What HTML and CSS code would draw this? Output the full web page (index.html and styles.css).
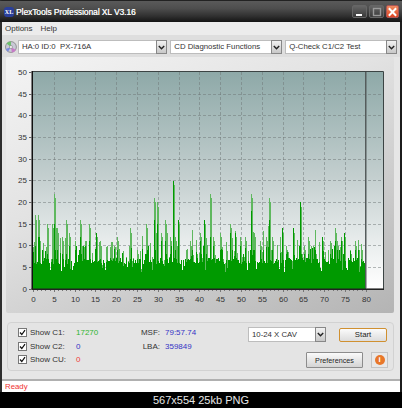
FILE: index.html
```html
<!DOCTYPE html>
<html lang="en">
<head>
<meta charset="utf-8">
<title>PlexTools Professional XL V3.16</title>
<link rel="stylesheet" href="styles.css">
</head>
<body>
<div class="window">
  <header class="titlebar">
    <span class="app-logo">XL</span>
    <span class="app-title">PlexTools Professional XL V3.16</span>
    <div class="win-buttons">
      <span class="win-btn"><svg width="12" height="12" viewBox="0 0 12 12"><rect x="2" y="8" width="6" height="2" fill="#fff"/></svg></span>
      <span class="win-btn"><svg width="12" height="12" viewBox="0 0 12 12"><rect x="2.5" y="2.5" width="7" height="7" fill="none" stroke="#9a9a9a" stroke-width="1.4"/></svg></span>
      <span class="win-btn close"><svg width="12" height="12" viewBox="0 0 12 12"><path d="M2 2 L10 10 M10 2 L2 10" stroke="#fff" stroke-width="2.2"/></svg></span>
    </div>
  </header>
  <nav class="menu"><span>Options</span><span>Help</span></nav>
  <div class="toolbar">
    <svg class="disc" width="12" height="12" viewBox="0 0 12 12">
      <circle cx="6" cy="6" r="5.5" fill="#c9c9d6" stroke="#777" stroke-width=".7"/>
      <path d="M6 6 L1.5 2.5 A6 6 0 0 1 6 .5 Z" fill="#6bc06b"/>
      <path d="M6 6 L11 9 A6 6 0 0 1 7 11.5 Z" fill="#c77ac7"/>
      <path d="M6 6 L.8 8 A6 6 0 0 0 3 10.8 Z" fill="#7a8ae0"/>
      <circle cx="6" cy="6" r="1.6" fill="#eee" stroke="#777" stroke-width=".5"/>
    </svg>
    <div class="combo c-device"><span class="combo-text">HA:0 ID:0&nbsp; PX-716A</span><span class="combo-btn"><svg width="7" height="5" viewBox="0 0 7 5"><path d="M.8 1 L3.5 3.8 L6.2 1" fill="none" stroke="#222" stroke-width="1.4"/></svg></span></div>
    <div class="combo c-func"><span class="combo-text">CD Diagnostic Functions</span><span class="combo-btn"><svg width="7" height="5" viewBox="0 0 7 5"><path d="M.8 1 L3.5 3.8 L6.2 1" fill="none" stroke="#222" stroke-width="1.4"/></svg></span></div>
    <div class="combo c-test"><span class="combo-text">Q-Check C1/C2 Test</span><span class="combo-btn"><svg width="7" height="5" viewBox="0 0 7 5"><path d="M.8 1 L3.5 3.8 L6.2 1" fill="none" stroke="#222" stroke-width="1.4"/></svg></span></div>
  </div>
  <section class="chart-panel">
    <svg id="chart" class="chart" width="388" height="256" viewBox="6 57 388 256"></svg>
  </section>
  <section class="controls">
    <div class="stats">
      <label class="check"><svg width="9" height="9" viewBox="0 0 9 9"><rect x=".5" y=".5" width="8" height="8" fill="#fff" stroke="#777"/><path d="M2 4.5 L3.8 6.5 L7 2.2" fill="none" stroke="#111" stroke-width="1.2"/></svg>Show C1:</label>
      <span class="val green">17270</span>
      <span class="lab">MSF:</span>
      <span class="val blue">79:57.74</span>
      <label class="check"><svg width="9" height="9" viewBox="0 0 9 9"><rect x=".5" y=".5" width="8" height="8" fill="#fff" stroke="#777"/><path d="M2 4.5 L3.8 6.5 L7 2.2" fill="none" stroke="#111" stroke-width="1.2"/></svg>Show C2:</label>
      <span class="val blue">0</span>
      <span class="lab">LBA:</span>
      <span class="val blue">359849</span>
      <label class="check"><svg width="9" height="9" viewBox="0 0 9 9"><rect x=".5" y=".5" width="8" height="8" fill="#fff" stroke="#777"/><path d="M2 4.5 L3.8 6.5 L7 2.2" fill="none" stroke="#111" stroke-width="1.2"/></svg>Show CU:</label>
      <span class="val red">0</span>
    </div>
    <div class="actions">
      <div class="action-row gap-start">
        <div class="combo c-speed"><span class="combo-text">10-24 X CAV</span><span class="combo-btn"><svg width="7" height="5" viewBox="0 0 7 5"><path d="M.8 1 L3.5 3.8 L6.2 1" fill="none" stroke="#222" stroke-width="1.4"/></svg></span></div>
        <button class="btn start">Start</button>
      </div>
      <div class="action-row gap-pref">
        <button class="btn prefs">Preferences</button>
        <button class="btn info"><span class="info-dot">i</span></button>
      </div>
    </div>
  </section>
  <footer class="status">Ready</footer>
</div>
<div class="caption">567x554 25kb PNG</div>
<script src="chart.js"></script>
</body>
</html>
```
FILE: styles.css
```css
* { box-sizing: border-box; }
html, body { margin: 0; padding: 0; }
body {
  width: 402px;
  height: 408px;
  background: #000;
  overflow: hidden;
  font-family: "Liberation Sans", Arial, sans-serif;
  font-size: 7.8px;
  color: #333;
}
.window {
  height: 392px;
  display: flex;
  flex-direction: column;
  background: #e6e6e6;
  border-left: 2px solid #2e2e2e;
  border-right: 2px solid #1c1c1c;
  border-top: 1px solid #222;
}
.titlebar {
  height: 21px;
  margin: 0 -2px;
  padding-left: 4px;
  display: flex;
  align-items: center;
  background: linear-gradient(#5a5a5a 0, #4e4e4e 35%, #303030 72%, #141414 100%);
  color: #fff;
}
.app-logo {
  width: 10px;
  height: 10px;
  border-radius: 3px;
  background: #2a3f9a;
  color: #fff;
  font: bold 6px "Liberation Serif", serif;
  line-height: 10px;
  text-align: center;
  margin-right: 2px;
}
.app-title {
  font-size: 8.3px;
  color: #f6f6f6;
  text-shadow: .3px 0 #f6f6f6;
}
.win-buttons {
  margin-left: auto;
  margin-right: 3px;
  display: flex;
  gap: 2px;
}
.win-btn {
  width: 15px;
  height: 13px;
  border: 1px solid #666;
  border-radius: 2px;
  background: linear-gradient(#666, #3a3a3a);
  display: flex;
  align-items: center;
  justify-content: center;
}
.win-btn.close {
  width: 13px;
  background: linear-gradient(#ee8a60, #dd4422);
  border-color: #a55;
}
.menu {
  height: 13px;
  padding-left: 3px;
  display: flex;
  gap: 8px;
  align-items: center;
  background: #ececec;
  color: #333;
  font-size: 8px;
}
.toolbar {
  height: 22px;
  padding: 2px 3px 0 3px;
  display: flex;
  align-items: center;
  background: #dedede;
}
.disc { margin-right: 1px; }
.combo {
  height: 14px;
  display: flex;
  background: #fff;
  border: 1px solid #bdbdbd;
  align-items: stretch;
}
.combo-text {
  flex: 1;
  padding-left: 3px;
  line-height: 12px;
  color: #333;
  white-space: nowrap;
  overflow: hidden;
}
.combo-btn {
  width: 11px;
  display: flex;
  align-items: center;
  justify-content: center;
  background: linear-gradient(#f2f2f2, #c8c8c8);
  border: 1px solid #888;
  margin: -1px;
}
.c-device { width: 151px; margin-right: 3px; }
.c-func { width: 113px; margin-right: 3px; }
.c-test { width: 113px; }
.chart-panel {
  height: 256px;
  margin: 0 6px 0 4px;
  border-radius: 2px;
  background: linear-gradient(155deg, #f4f4f4 0%, #e2e2e2 40%, #b4b4b4 100%);
}
.chart { display: block; }
.chart text {
  font-family: "Liberation Sans", Arial, sans-serif;
  font-size: 8px;
  fill: #333;
}
.controls {
  height: 49px;
  margin: 9px 6px 0 5px;
  border: 1px solid #d2d2d2;
  border-radius: 4px;
  background: #e4e4e4;
  display: flex;
  padding: 3px 5px 0 10px;
}
.stats {
  display: grid;
  grid-template-columns: 58px 64px 20px auto;
  grid-auto-rows: 13.5px;
  align-items: center;
  font-size: 8px;
}
.check {
  display: flex;
  align-items: center;
  gap: 3px;
  color: #333;
  white-space: nowrap;
}
.val { white-space: nowrap; }
.val.green { color: #2eb52e; }
.val.blue { color: #3434c4; }
.val.red { color: #f03c3c; }
.stats .lab { grid-column: 3; text-align: right; color: #333; white-space: nowrap; }
.stats .lab + .val { padding-left: 5px; }
.actions {
  margin-left: auto;
  padding-top: 1px;
  display: flex;
  flex-direction: column;
  align-items: flex-end;
}
.action-row { display: flex; align-items: center; }
.gap-start { gap: 13px; margin-right: 1px; }
.gap-pref { gap: 8px; margin-top: 10px; }
.c-speed { width: 78px; height: 15px; }
.c-speed .combo-text { line-height: 13px; }
.btn {
  font: inherit;
  color: #222;
  padding: 0;
  display: flex;
  align-items: center;
  justify-content: center;
}
.start {
  width: 48px;
  height: 14px;
  border: 1px solid #d09030;
  border-radius: 2px;
  background: linear-gradient(#fbfbfb, #dcdcdc);
}
.prefs {
  width: 57px;
  height: 16px;
  font-size: 7.2px;
  border: 1px solid #8c8c8c;
  border-radius: 1px;
  background: linear-gradient(#fafafa, #d4d4d4);
}
.info {
  width: 17px;
  height: 16px;
  border: 1px solid #c4c4c4;
  background: #e8e8e8;
}
.info-dot {
  width: 10px;
  height: 10px;
  border-radius: 50%;
  background: #e8772a;
  color: #fff;
  font-weight: bold;
  font-size: 8px;
  line-height: 10px;
  text-align: center;
}
.status {
  height: 13px;
  margin-top: 8px;
  padding-left: 3px;
  background: #fff;
  border-top: 2px solid #b0b0b0;
  color: #f03030;
  font-size: 7.8px;
  line-height: 11px;
}
.caption {
  height: 16px;
  color: #e8e8e8;
  font-size: 11px;
  line-height: 16px;
  text-align: center;
}
```
FILE: chart.js
```js
(function () {
  var NS = 'http://www.w3.org/2000/svg';
  var svg = document.getElementById('chart');
  var X0 = 33, XU = 4.16, Y0 = 288.5, YU = 4.33, RIGHT = 383, TOP = 72;

  function el(name, attrs, text) {
    var n = document.createElementNS(NS, name);
    for (var k in attrs) n.setAttribute(k, attrs[k]);
    if (text !== undefined) n.textContent = text;
    svg.appendChild(n);
    return n;
  }

  var defs = document.createElementNS(NS, 'defs');
  defs.innerHTML = '<linearGradient id="plotbg" x1="0" y1="0" x2="0" y2="1">' +
    '<stop offset="0" stop-color="#8ea9a8"/><stop offset=".5" stop-color="#c5d0d0"/>' +
    '<stop offset=".8" stop-color="#eaeeee"/><stop offset="1" stop-color="#fff"/></linearGradient>';
  svg.appendChild(defs);

  el('rect', { x: X0, y: TOP, width: RIGHT - X0, height: Y0 - TOP, fill: 'url(#plotbg)' });

  var i, y, x;
  // grid
  for (i = 5; i <= 45; i += 5) {
    y = Math.round(Y0 - i * YU) + .5;
    el('line', { x1: X0, x2: RIGHT, y1: y, y2: y, stroke: '#6e7676', 'stroke-opacity': .5, 'stroke-dasharray': '3 2' });
  }
  for (i = 5; i <= 75; i += 5) {
    x = Math.round(X0 + i * XU) + .5;
    el('line', { x1: x, x2: x, y1: TOP, y2: Y0, stroke: '#6e7676', 'stroke-opacity': .5, 'stroke-dasharray': '3 2' });
  }

  // seeded noise
  var s = 20240;
  function rnd() { s = (s * 16807) % 2147483647; return s / 2147483647; }

  // explicit spikes read from the trace: [pixel, light top, dark top]
  var peaks = [
    [35,17,9],[38,17,12],[39,12,12],[47,15,8],[52,15,7],[54,22,15],[55,15,9],[57,14,9],[62,12,8],[66,16,8],[69,13,10],
    [75,11,9],[80,16,12],[81,11,8],[85,11,10],[89,15,11],[96,13,13],[100,11,7],[117,12,9],[130,14,6],[137,9,7],
    [146,15,8],[147,11,9],[154,21,16],[155,14,9],[157,20,15],[161,13,11],[165,16,11],[166,14,8],[170,12,8],
    [173,25,25],[175,12,9],[178,16,16],[190,11,7],[196,9,8],[200,13,11],[204,16,16],[206,10,8],[210,22,12],
    [213,12,10],[220,13,9],[230,15,13],[235,13,13],[240,12,10],[245,12,8],[251,22,18],[254,13,9],[260,11,9],
    [266,12,8],[269,21,16],[272,12,9],[282,14,14],[286,10,8],[293,14,14],[300,20,20],[304,10,8],[308,12,8],
    [313,10,7],[322,12,12],[330,11,8],[335,14,11],[337,11,9],[341,12,11],[344,13,13],[350,9,7],[355,11,9],
    [358,10,9],[361,10,7]
  ];
  var pk = {};
  peaks.forEach(function (p) { pk[p[0]] = p; });

  var dark = '', light = '';
  var b = Math.round(Y0);
  function col(px, top) { return 'M' + px + ' ' + (b - Math.round(top * YU)) + 'h1V' + b + 'h-1Z'; }
  for (var px = 33; px < 366; px++) {
    var r = rnd(), base = 5.8 + rnd() * 1.4, d, l;
    if (r < .1) base = 3.8 + rnd() * 1.6;
    else if (r < .32) base = 7.5 + rnd() * 2.5;
    l = base + (rnd() < .4 ? rnd() * 5 : 0);
    d = base;
    light += col(px, l);
    dark += col(px, d);
    if (pk[px]) {
      light += col(px, pk[px][1]) + col(px + 1, pk[px][1] - 1);
      dark += col(px, pk[px][2]);
    }
  }
  el('path', { d: light, fill: '#5fb85f', 'shape-rendering': 'crispEdges' });
  el('path', { d: dark, fill: '#009a00', 'shape-rendering': 'crispEdges' });

  // cursor + frame
  el('rect', { x: 365, y: TOP, width: 1.5, height: Y0 - TOP, fill: '#555c5c' });
  el('path', { d: 'M32.5 71.5H383.5V289.5', fill: 'none', stroke: '#3c4444', 'stroke-width': 1 });
  el('rect', { x: 31.5, y: 71, width: 1.5, height: 219, fill: '#111' });
  el('rect', { x: 31.5, y: 288.5, width: 352.5, height: 1.5, fill: '#222' });

  // y labels and ticks
  for (i = 0; i <= 50; i += 5) {
    y = Y0 - i * YU;
    el('text', { x: 27, y: y + 3, 'text-anchor': 'end' }, String(i));
    el('line', { x1: 29, x2: 32, y1: Math.round(y) + .5, y2: Math.round(y) + .5, stroke: '#666' });
  }
  // x labels and ticks
  for (i = 0; i <= 80; i++) {
    x = Math.round(X0 + i * XU) + .5;
    el('line', { x1: x, x2: x, y1: 290, y2: i % 5 ? 291 : 292, stroke: '#777' });
    if (i % 5 === 0) el('text', { x: x, y: 302, 'text-anchor': 'middle' }, String(i));
  }
})();
```
